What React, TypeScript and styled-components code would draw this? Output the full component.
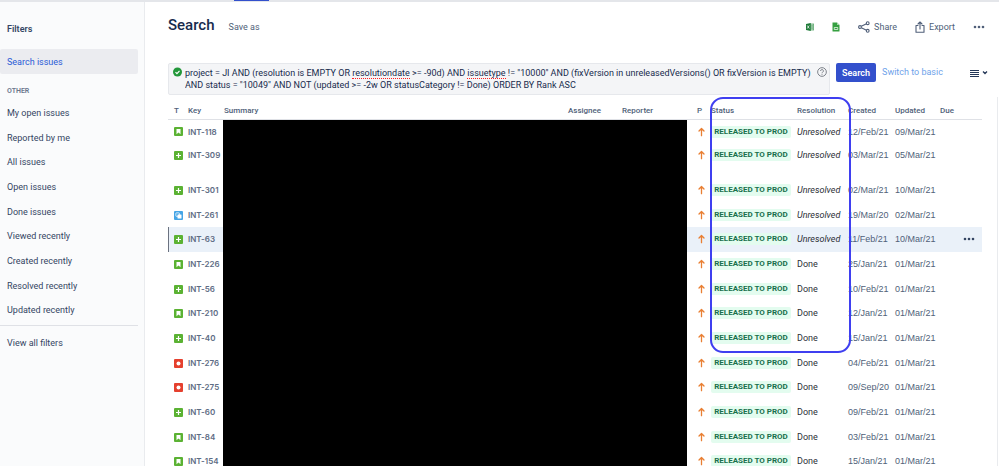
import React from "react";
import styled, { createGlobalStyle, css } from "styled-components";

const GlobalStyle = createGlobalStyle`
  *, *::before, *::after { box-sizing: border-box; }
  body {
    margin: 0;
    background: #fff;
    color: #344563;
    font: 9px/12px Roboto, "Liberation Sans", sans-serif;
  }
  button, textarea { font: inherit; color: inherit; }
  button { border: 0; padding: 0; background: none; cursor: pointer; }
  a { color: inherit; text-decoration: none; }
  svg { display: block; flex: none; }
`;

const Page = styled.div`
  display: flex;
  flex-direction: column;
  height: 100vh;
  overflow: hidden;
`;

const TopEdge = styled.div`
  flex: none;
  height: 2px;
  padding-left: 234px;
  background: #e4e6ea;
`;

const ActiveTab = styled.div`
  width: 35px;
  height: 1px;
  background: #3350cc;
`;

const Body = styled.div`
  flex: 1;
  min-height: 0;
  display: flex;
`;

const Sidebar = styled.nav`
  flex: none;
  width: 145px;
  padding: 21px 6px 0 0;
  background: #fafbfc;
  border-right: 1px solid #e9ebee;
`;

const SidebarTitle = styled.h2`
  margin: 0 0 14px;
  padding-left: 7px;
  font-size: 9px;
  line-height: 12px;
  font-weight: 600;
`;

const SidebarGroup = styled.h3`
  margin: 12px 0 4px;
  padding-left: 7px;
  font-size: 7px;
  line-height: 10px;
  font-weight: 600;
  color: #6b778c;
`;

const NavList = styled.ul`
  list-style: none;
  margin: 0;
  padding: 0;

  li:nth-child(3n) a { height: 24px; }
`;

const NavItem = styled.a<{ $active?: boolean }>`
  display: flex;
  align-items: center;
  height: 25px;
  padding-left: 7px;
  border-radius: 2px;
  ${(p) => p.$active && css`
    color: #2a5bd7;
    background: #ebecf0;
  `}
`;

const Divider = styled.hr`
  margin: 3px 0 4px;
  border: 0;
  border-top: 1px solid #dfe1e6;
`;

const Main = styled.main`
  flex: 1;
  min-width: 0;
  display: flex;
  flex-direction: column;
  padding: 12px 1px 0 23px;
`;

const Header = styled.header`
  flex: none;
  display: flex;
  align-items: center;
  height: 26px;
  padding-right: 13px;
`;

const Title = styled.h1`
  margin: 0 14px 4px 0;
  font-size: 15px;
  line-height: 20px;
  font-weight: 500;
  color: #172b4d;
`;

const TextButton = styled.button`
  display: flex;
  align-items: center;
  gap: 4px;
  color: #505f79;
`;

const Actions = styled.div`
  display: flex;
  align-items: center;
  gap: 18px;
  margin-left: auto;
`;

const SearchBar = styled.form`
  flex: none;
  display: flex;
  align-items: flex-start;
  gap: 6px;
  margin-top: 23px;
  padding-right: 9px;
`;

const QueryBox = styled.div`
  flex: 1;
  min-width: 0;
  display: flex;
  gap: 3px;
  padding: 3px 2px 3px 4px;
  border: 1px solid #e6e8ec;
  border-radius: 2px;
  background: #f4f5f7;
`;

const QueryField = styled.div`
  flex: 1;
  min-width: 0;
  display: grid;
  color: #172b4d;
  line-height: 12px;
`;

const QueryInput = styled.textarea`
  grid-area: 1 / 1;
  width: 100%;
  height: 24px;
  margin: 0;
  padding: 0;
  border: 0;
  outline: 0;
  resize: none;
  overflow: hidden;
  background: none;
`;

const SpellLayer = styled.div`
  grid-area: 1 / 1;
  height: 13px;
  overflow: hidden;
  white-space: nowrap;
  color: transparent;

  u {
    text-decoration: none;
    border-bottom: 1px dotted #ff2020;
  }
`;

const PrimaryButton = styled.button`
  height: 19px;
  padding: 0 6px;
  border-radius: 2px;
  background: #3350cc;
  color: #fff;
  font-weight: 600;
`;

const BasicLink = styled.a`
  line-height: 19px;
  color: #6ea2ea;
`;

const ViewButton = styled.button`
  display: flex;
  align-items: center;
  height: 19px;
  margin-left: auto;
`;

const SearchTools = styled.div`
  display: flex;
  gap: 6px;
  width: 153px;
`;

const Results = styled.section`
  position: relative;
  flex: 1;
  min-height: 0;
  margin-top: 2px;
  padding: 6px 15px 0 0;
  border-right: 1px solid #e9ebee;
`;

const IssueTable = styled.table`
  width: 100%;
  table-layout: fixed;
  border-collapse: collapse;
`;

const Col = styled.col<{ $w?: number }>`
  width: ${(p) => (p.$w ? `${p.$w}px` : "auto")};
`;

const HeadCell = styled.th<{ $inset?: number }>`
  height: 16px;
  padding: 0 0 0 ${(p) => p.$inset ?? 0}px;
  border-bottom: 1px solid #dfe1e6;
  font-size: 8px;
  line-height: 12px;
  font-weight: 500;
  text-align: left;
  white-space: nowrap;
  color: #505f79;
`;

const Row = styled.tr<{ $tall?: boolean; $selected?: boolean }>`
  height: ${(p) => (p.$tall ? 35 : 25)}px;
  &:nth-child(3n + 1) { height: 24px; }
  background: ${(p) => (p.$selected ? "#eaf1f9" : "transparent")};
  > td:first-child { box-shadow: ${(p) => (p.$selected ? "inset 1px 0 0 #6b7280" : "none")}; }
`;

const Cell = styled.td<{ $inset?: number }>`
  padding: 6px 0 0 ${(p) => p.$inset ?? 0}px;
  vertical-align: top;
  white-space: nowrap;
  line-height: 12px;
  color: #505f79;
`;

const DateCell = styled(Cell)`
  font-family: "Liberation Sans", sans-serif;
`;

const Redacted = styled.td`
  padding: 0;
  background: #000;
`;

const IconSlot = styled.span`
  display: flex;
  align-items: center;
  height: 12px;
`;

const KeyLink = styled.a`
  display: block;
  font-family: Inter, sans-serif;
  font-size: 8px;
  font-weight: 600;
  color: #5e6c84;
`;

const Lozenge = styled.span`
  display: block;
  width: 80px;
  height: 12px;
  border-radius: 2px;
  background: #e3fcef;
  color: #19704c;
  font-size: 8px;
  line-height: 12px;
  font-weight: 700;
  text-align: center;
`;

const Resolution = styled.span<{ $open: boolean }>`
  color: #2b2f36;
  font-style: ${(p) => (p.$open ? "italic" : "normal")};
`;

const Highlight = styled.div`
  position: absolute;
  top: 0;
  right: 146px;
  width: 141px;
  height: 256px;
  border: 2px solid #3f3ff0;
  border-radius: 13px;
  pointer-events: none;
`;

type Kind = "story" | "improvement" | "subtask" | "bug";

const kindColor: Record<Kind, string> = {
  story: "#5bb233",
  improvement: "#5bb233",
  subtask: "#45a5e6",
  bug: "#e5402e",
};

function KindIcon({ kind }: { kind: Kind }) {
  return (
    <svg width="9" height="9" viewBox="0 0 18 18" role="img" aria-label={kind}>
      <rect width="18" height="18" rx="2" fill={kindColor[kind]} />
      {kind === "story" && <path d="M5 4h8v10.5l-4-3.6-4 3.6z" fill="#fff" />}
      {kind === "improvement" && <path d="M9 4v10M4 9h10" stroke="#fff" strokeWidth="2.4" />}
      {kind === "bug" && <circle cx="9" cy="9" r="4" fill="#fff" />}
      {kind === "subtask" && (
        <>
          <rect x="3.7" y="3.7" width="7" height="7" rx="1" fill="none" stroke="#fff" strokeWidth="1.5" />
          <rect x="7" y="7" width="8" height="8" rx="1" fill="#fff" />
        </>
      )}
    </svg>
  );
}

function PriorityIcon() {
  return (
    <svg width="9" height="10" viewBox="0 0 9 10" role="img" aria-label="High priority" fill="none" stroke="#e97f33" strokeWidth="1.3" strokeLinecap="round" strokeLinejoin="round">
      <path d="M4.5 8.7V1.5M2 4l2.5-2.5L7 4" />
    </svg>
  );
}

function Dots({ color = "#505f79" }: { color?: string }) {
  return (
    <svg width="12" height="4" viewBox="0 0 12 4" fill={color} aria-hidden>
      <circle cx="2" cy="2" r="1.3" />
      <circle cx="6" cy="2" r="1.3" />
      <circle cx="10" cy="2" r="1.3" />
    </svg>
  );
}

function ExcelIcon() {
  return (
    <svg width="8" height="8" viewBox="0 0 16 16" aria-hidden>
      <rect x="8" y="2" width="7.5" height="12" fill="#fff" stroke="#2f8f45" strokeWidth="1.2" />
      <path d="M9 5.5h6M9 8h6M9 10.5h6M12 2v12" stroke="#2f8f45" strokeWidth="1.1" />
      <path d="M0 1.8 9.5 0v16L0 14.2z" fill="#1e7b38" />
      <path d="m2.5 5 4 6m0-6-4 6" stroke="#fff" strokeWidth="1.5" />
    </svg>
  );
}

function SheetIcon() {
  return (
    <svg width="8" height="10" viewBox="0 0 16 20" aria-hidden>
      <path d="M1 1h9l5 5v12a1 1 0 0 1-1 1H2a1 1 0 0 1-1-1z" fill="#36a041" />
      <path d="M10 1v5h5z" fill="#a5d8aa" />
      <path d="M4.5 11h7v4h-7z" fill="none" stroke="#fff" strokeWidth="1.4" />
    </svg>
  );
}

function ShareIcon() {
  return (
    <svg width="12" height="12" viewBox="0 0 12 12" fill="none" stroke="#505f79" strokeWidth="1.1" aria-hidden>
      <circle cx="2" cy="6" r="1.4" />
      <circle cx="9.7" cy="2.2" r="1.4" />
      <circle cx="9.7" cy="9.8" r="1.4" />
      <path d="m3.3 5.3 5.2-2.5M3.3 6.7l5.2 2.5" />
    </svg>
  );
}

function ExportIcon() {
  return (
    <svg width="10" height="12" viewBox="0 0 10 12" fill="none" stroke="#505f79" strokeWidth="1.1" strokeLinejoin="round" strokeLinecap="round" aria-hidden>
      <path d="M3 4.5H1v6.7h8V4.500H7M5 8V1M3 3l2-2 2 2" />
    </svg>
  );
}

function ValidIcon() {
  return (
    <svg width="9" height="10" viewBox="0 0 18 20" role="img" aria-label="Valid query">
      <circle cx="9" cy="10" r="9" fill="#22973a" />
      <path d="m5 10.2 2.9 2.9L13 7.8" fill="none" stroke="#fff" strokeWidth="2.4" />
    </svg>
  );
}

function HelpIcon() {
  return (
    <svg width="10" height="10" viewBox="0 0 20 20" role="img" aria-label="Syntax help" fill="none" stroke="#6a6f78" strokeWidth="1.7">
      <circle cx="10" cy="10" r="8.7" />
      <path d="M7.2 8a2.8 2.8 0 1 1 4.2 2.3c-1 .6-1.4 1-1.4 2M10 13.7v1.8" />
    </svg>
  );
}

function ListIcon() {
  return (
    <svg width="19" height="8" viewBox="0 0 19 8" fill="none" stroke="#253858" aria-hidden>
      <path d="M0 1.5h9M0 3.5h9M0 5.5h9M0 7.5h9" strokeWidth="1.2" />
      <path d="m13 2.5 2 2 2-2" strokeWidth="1.3" />
    </svg>
  );
}

const filters = [
  "My open issues", "Reported by me", "All issues", "Open issues", "Done issues",
  "Viewed recently", "Created recently", "Resolved recently", "Updated recently",
];

interface Issue {
  key: string;
  kind: Kind;
  resolution: "Unresolved" | "Done";
  created: string;
  updated: string;
  tall?: boolean;
  selected?: boolean;
}

const issues: Issue[] = [
  { key: "INT-118", kind: "story", resolution: "Unresolved", created: "12/Feb/21", updated: "09/Mar/21" },
  { key: "INT-309", kind: "improvement", resolution: "Unresolved", created: "03/Mar/21", updated: "05/Mar/21", tall: true },
  { key: "INT-301", kind: "improvement", resolution: "Unresolved", created: "02/Mar/21", updated: "10/Mar/21" },
  { key: "INT-261", kind: "subtask", resolution: "Unresolved", created: "19/Mar/20", updated: "02/Mar/21" },
  { key: "INT-63", kind: "improvement", resolution: "Unresolved", created: "11/Feb/21", updated: "10/Mar/21", selected: true },
  { key: "INT-226", kind: "story", resolution: "Done", created: "25/Jan/21", updated: "01/Mar/21" },
  { key: "INT-56", kind: "improvement", resolution: "Done", created: "10/Feb/21", updated: "01/Mar/21" },
  { key: "INT-210", kind: "story", resolution: "Done", created: "12/Jan/21", updated: "01/Mar/21" },
  { key: "INT-40", kind: "improvement", resolution: "Done", created: "15/Jan/21", updated: "01/Mar/21" },
  { key: "INT-276", kind: "bug", resolution: "Done", created: "04/Feb/21", updated: "01/Mar/21" },
  { key: "INT-275", kind: "bug", resolution: "Done", created: "09/Sep/20", updated: "01/Mar/21" },
  { key: "INT-60", kind: "improvement", resolution: "Done", created: "09/Feb/21", updated: "01/Mar/21" },
  { key: "INT-84", kind: "story", resolution: "Done", created: "03/Feb/21", updated: "01/Mar/21" },
  { key: "INT-154", kind: "story", resolution: "Done", created: "15/Jan/21", updated: "01/Mar/21" },
];

const query =
  'project = JI AND (resolution is EMPTY OR resolutiondate >= -90d) AND issuetype != "10000" AND (fixVersion in unreleasedVersions() OR fixVersion is EMPTY) AND status = "10049" AND NOT (updated >= -2w OR statusCategory != Done) ORDER BY Rank ASC';

export default function App() {
  return (
    <Page>
      <GlobalStyle />
      <TopEdge><ActiveTab /></TopEdge>
      <Body>
        <Sidebar aria-label="Filters">
          <SidebarTitle>Filters</SidebarTitle>
          <NavItem href="#search" $active>Search issues</NavItem>
          <SidebarGroup>OTHER</SidebarGroup>
          <NavList>
            {filters.map((name) => (
              <li key={name}><NavItem href="#filter">{name}</NavItem></li>
            ))}
          </NavList>
          <Divider />
          <NavItem href="#all">View all filters</NavItem>
        </Sidebar>
        <Main>
          <Header>
            <Title>Search</Title>
            <TextButton type="button">Save as</TextButton>
            <Actions>
              <TextButton type="button" aria-label="Open in Excel"><ExcelIcon /></TextButton>
              <TextButton type="button" aria-label="Open in Sheets"><SheetIcon /></TextButton>
              <TextButton type="button"><ShareIcon />Share</TextButton>
              <TextButton type="button"><ExportIcon />Export</TextButton>
              <TextButton type="button" aria-label="More actions"><Dots /></TextButton>
            </Actions>
          </Header>
          <SearchBar onSubmit={(e) => e.preventDefault()}>
            <QueryBox>
              <ValidIcon />
              <QueryField>
                <QueryInput aria-label="Query" spellCheck={false} defaultValue={query} />
                <SpellLayer aria-hidden>
                  project = JI AND (resolution is EMPTY OR <u>resolutiondate</u> &gt;= -90d) AND <u>issuetype</u>
                </SpellLayer>
              </QueryField>
              <HelpIcon />
            </QueryBox>
            <SearchTools>
              <PrimaryButton type="submit">Search</PrimaryButton>
              <BasicLink href="#basic">Switch to basic</BasicLink>
              <ViewButton type="button" aria-label="Change view"><ListIcon /></ViewButton>
            </SearchTools>
          </SearchBar>
          <Results>
            <IssueTable>
              <colgroup>
                <Col $w={20} />
                <Col $w={35} />
                <Col />
                <Col $w={54} />
                <Col $w={65} />
                <Col $w={24} />
                <Col $w={86} />
                <Col $w={51} />
                <Col $w={47} />
                <Col $w={45} />
                <Col $w={42} />
              </colgroup>
              <thead>
                <tr>
                  <HeadCell $inset={6}>T</HeadCell>
                  <HeadCell>Key</HeadCell>
                  <HeadCell $inset={1}>Summary</HeadCell>
                  <HeadCell>Assignee</HeadCell>
                  <HeadCell>Reporter</HeadCell>
                  <HeadCell $inset={10}>P</HeadCell>
                  <HeadCell>Status</HeadCell>
                  <HeadCell>Resolution</HeadCell>
                  <HeadCell>Created</HeadCell>
                  <HeadCell>Updated</HeadCell>
                  <HeadCell>Due</HeadCell>
                </tr>
              </thead>
              <tbody>
                {issues.map((issue, i) => (
                  <Row key={issue.key} $tall={issue.tall} $selected={issue.selected}>
                    <Cell $inset={6}><IconSlot><KindIcon kind={issue.kind} /></IconSlot></Cell>
                    <Cell><KeyLink href="#issue">{issue.key}</KeyLink></Cell>
                    {i === 0 && <Redacted colSpan={3} rowSpan={issues.length} />}
                    <Cell $inset={10}><IconSlot><PriorityIcon /></IconSlot></Cell>
                    <Cell><Lozenge>RELEASED TO PROD</Lozenge></Cell>
                    <Cell><Resolution $open={issue.resolution === "Unresolved"}>{issue.resolution}</Resolution></Cell>
                    <DateCell>{issue.created}</DateCell>
                    <DateCell>{issue.updated}</DateCell>
                    <Cell $inset={23}>
                      {issue.selected && (
                        <IconSlot>
                          <TextButton type="button" aria-label="Issue actions"><Dots color="#344563" /></TextButton>
                        </IconSlot>
                      )}
                    </Cell>
                  </Row>
                ))}
              </tbody>
            </IssueTable>
            <Highlight />
          </Results>
        </Main>
      </Body>
    </Page>
  );
}
